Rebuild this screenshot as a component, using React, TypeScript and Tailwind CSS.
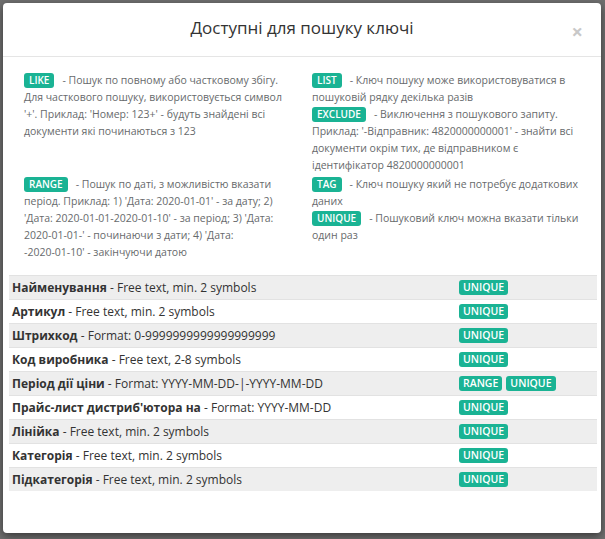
import React from 'react';

const font = { fontFamily: '"Open Sans", "Noto Sans", sans-serif' };

function Badge({ children }: { children: React.ReactNode }) {
  return (
    <span className="mr-[8px] inline-block rounded-[3px] bg-[#1ab394] px-[5px] text-[10px] font-semibold leading-[15px] text-white">
      {children}
    </span>
  );
}

const keys = [
  { name: 'Найменування', desc: 'Free text, min. 2 symbols', tags: ['UNIQUE'] },
  { name: 'Артикул', desc: 'Free text, min. 2 symbols', tags: ['UNIQUE'] },
  { name: 'Штрихкод', desc: 'Format: 0-9999999999999999999', tags: ['UNIQUE'] },
  { name: 'Код виробника', desc: 'Free text, 2-8 symbols', tags: ['UNIQUE'] },
  { name: 'Період дії ціни', desc: 'Format: YYYY-MM-DD-|-YYYY-MM-DD', tags: ['RANGE', 'UNIQUE'] },
  { name: "Прайс-лист дистриб'ютора на", desc: 'Format: YYYY-MM-DD', tags: ['UNIQUE'] },
  { name: 'Лінійка', desc: 'Free text, min. 2 symbols', tags: ['UNIQUE'] },
  { name: 'Категорія', desc: 'Free text, min. 2 symbols', tags: ['UNIQUE'] },
  { name: 'Підкатегорія', desc: 'Free text, min. 2 symbols', tags: ['UNIQUE'] },
];

export default function App() {
  return (
    <div className="h-[539px] w-[605px] overflow-hidden bg-[#6f6f6f] pt-[3px] pl-[3px]" style={font}>
      {/* модальне вікно */}
      <div className="relative h-[530px] w-[598px] rounded-[4px] bg-white shadow-[0_3px_9px_rgba(0,0,0,0.5)]">
        <div className="border-b border-[#e5e5e5] pt-[12px] pb-[15px] text-center">
          <h4 className="text-[17px] font-medium leading-[26px] text-[#333]">Доступні для пошуку ключі</h4>
          <span className="absolute right-[18px] top-[19px] text-[20px] font-bold leading-[20px] text-[#c8c8c8]">×</span>
        </div>

        <div className="pt-[15px]">
          {/* легенда */}
          <div className="grid grid-cols-[294px_294px] gap-y-[2px] text-[10.5px] leading-[17px] text-[#676a6c]">
            <div className="pl-[21px] pr-[10px]">
              <Badge>LIKE</Badge>- Пошук по повному або частковому збігу. Для часткового пошуку, використовується символ '+'. Приклад: 'Номер: 123+' - будуть знайдені всі документи які починаються з 123
            </div>
            <div className="pl-[15px] pr-[10px]">
              <div>
                <Badge>LIST</Badge>- Ключ пошуку може використовуватися в пошуковій рядку декілька разів
              </div>
              <div>
                <Badge>EXCLUDE</Badge>- Виключення з пошукового запиту. Приклад: '-Відправник: 4820000000001' - знайти всі документи окрім тих, де відправником є ідентифікатор 4820000000001
              </div>
            </div>
            <div className="pl-[21px] pr-[10px]">
              <Badge>RANGE</Badge>- Пошук по даті, з можливістю вказати період. Приклад: 1) 'Дата: 2020-01-01' - за дату; 2) 'Дата: 2020-01-01-2020-01-10' - за період; 3) 'Дата: 2020-01-01-' - починаючи з дати; 4) 'Дата: <span className="whitespace-nowrap">-2020-01-10'</span> - закінчуючи датою
            </div>
            <div className="pl-[15px] pr-[10px]">
              <div>
                <Badge>TAG</Badge>- Ключ пошуку який не потребує додаткових даних
              </div>
              <div>
                <Badge>UNIQUE</Badge>- Пошуковий ключ можна вказати тільки один раз
              </div>
            </div>
          </div>

          {/* таблиця ключів */}
          <div className="mt-[14px] ml-[6px] mr-[4px] text-[12px] text-[#333]">
            {keys.map((k, i) => (
              <div
                key={k.name}
                className={`flex h-[24px] items-center border-t border-[#e2e2e2] ${i % 2 === 0 ? 'bg-[#eeeeee]' : 'bg-white'}`}
              >
                <div className="w-[450px] pl-[3px] leading-[17px]">
                  <b className="font-bold">{k.name}</b> - {k.desc}
                </div>
                <div className="flex gap-[4px]">
                  {k.tags.map((t) => (
                    <span key={t} className="rounded-[3px] bg-[#1ab394] px-[4px] text-[10.5px] font-semibold leading-[15px] text-white">
                      {t}
                    </span>
                  ))}
                </div>
              </div>
            ))}
          </div>
        </div>
      </div>
    </div>
  );
}
